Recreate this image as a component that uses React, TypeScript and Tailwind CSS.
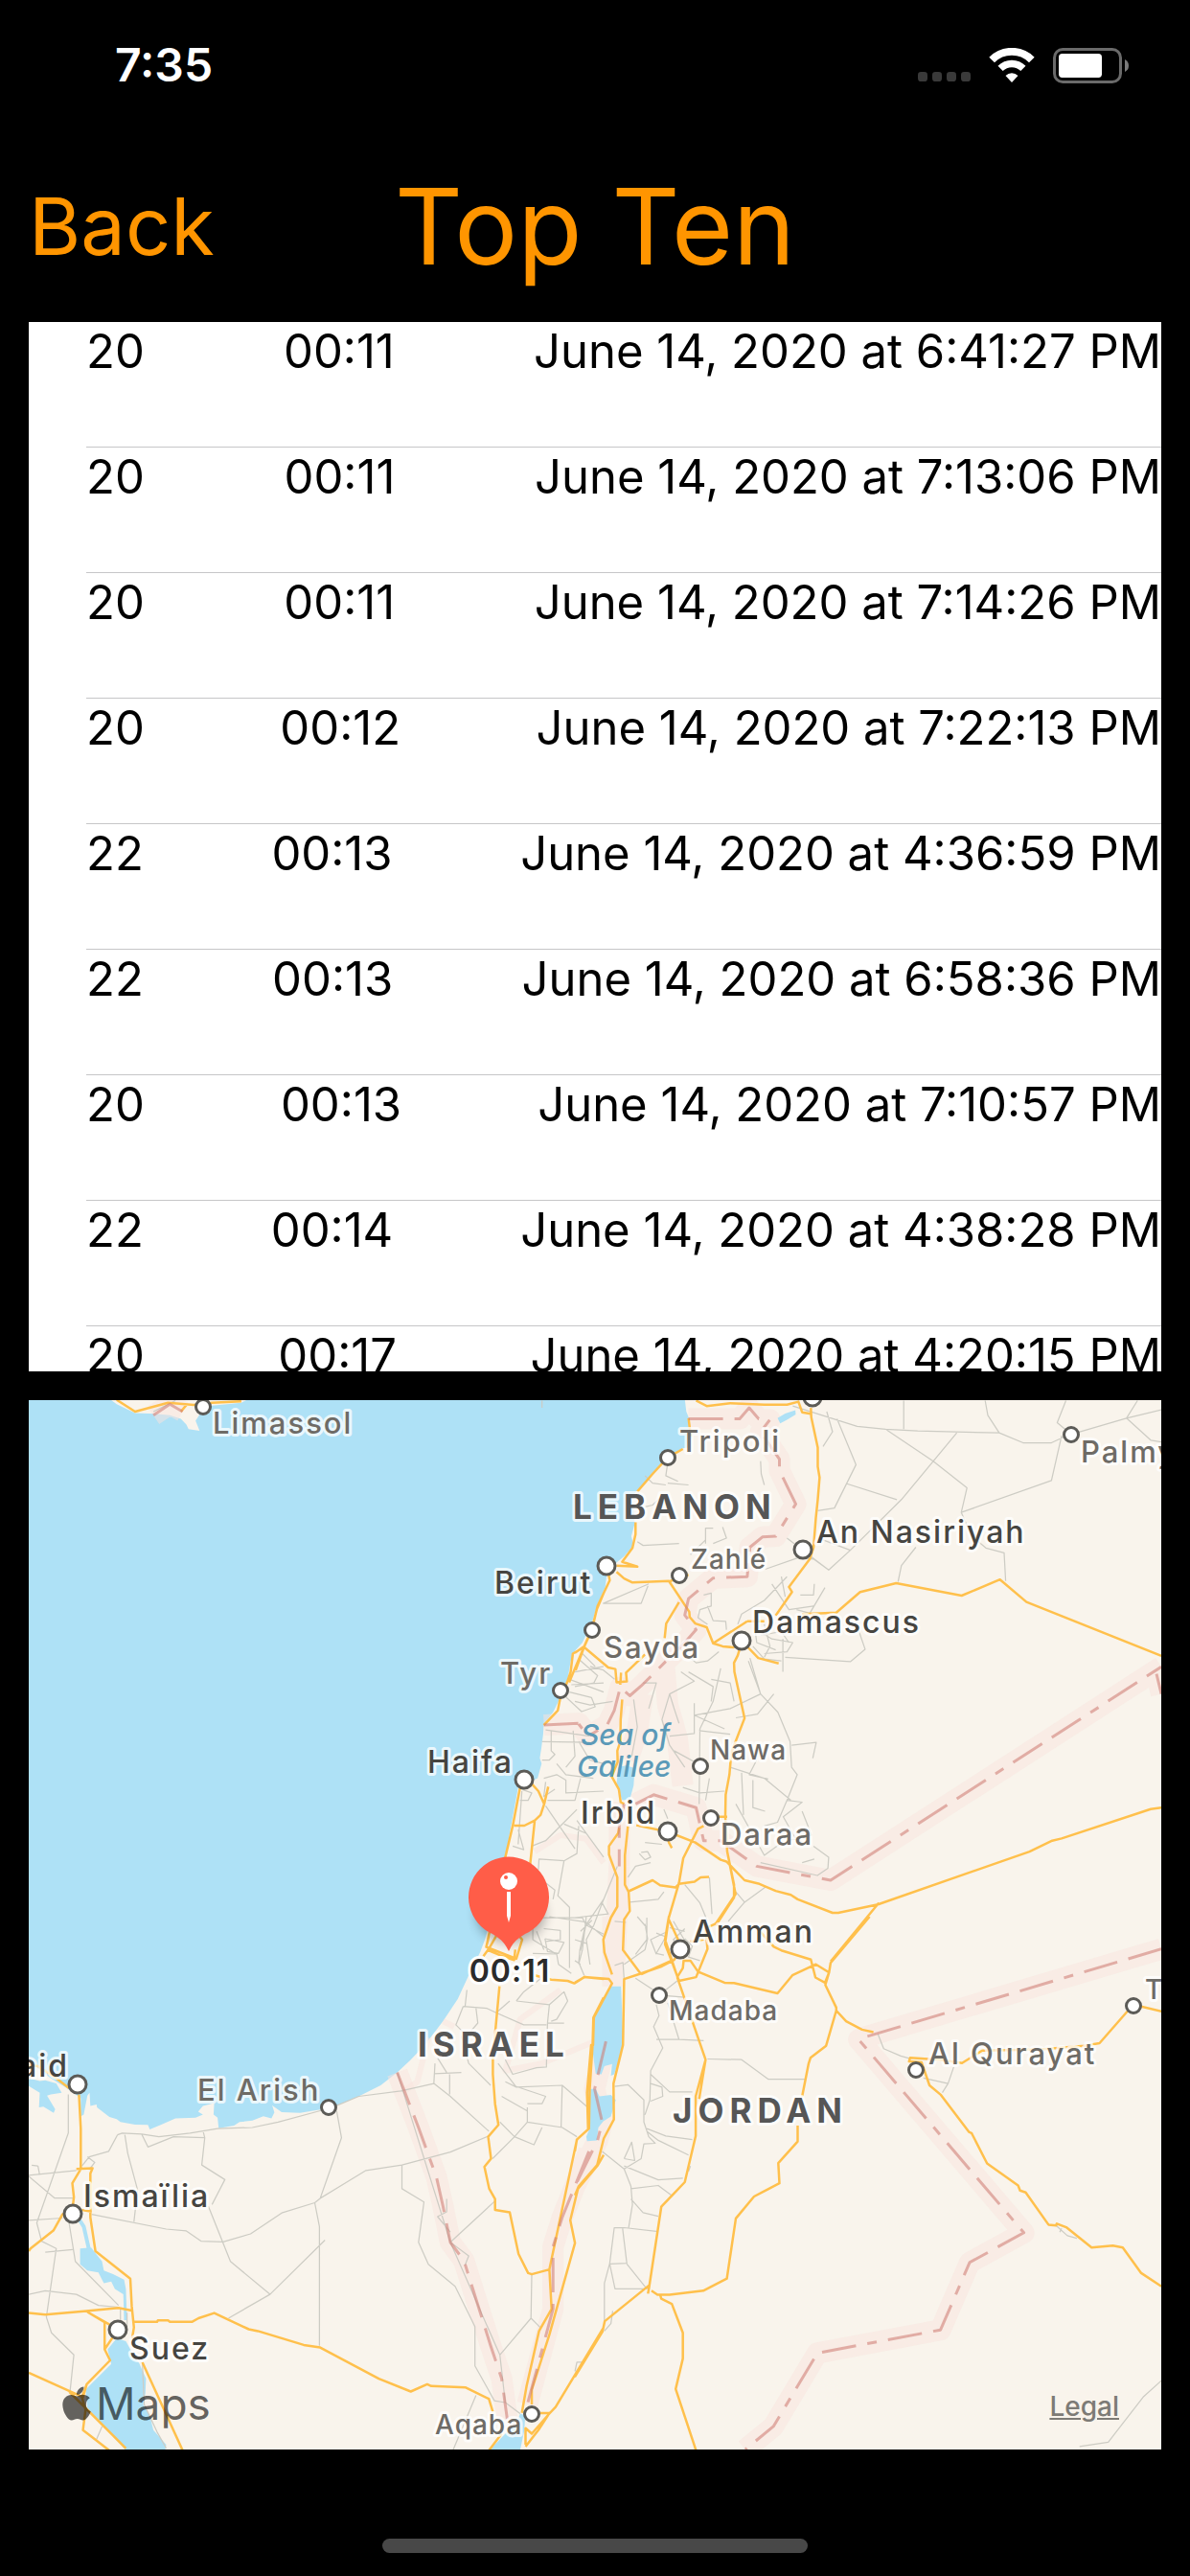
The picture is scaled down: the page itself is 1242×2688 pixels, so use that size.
import React from "react";
import { FaApple } from "react-icons/fa";

type Tile = "nw" | "ne" | "sw" | "se";

/* Each survey tile has its own grid; these map it onto the 1182 x 1095 map. */
const TILES: Record<Tile, { x: number; y: number; sx: number; sy: number }> = {
  nw: { x: 0, y: -11, sx: 0.38265, sy: 0.38265 },
  ne: { x: 570, y: -11, sx: 0.39541, sy: 0.38265 },
  sw: { x: 0, y: 539, sx: 0.38265, sy: 0.38265 },
  se: { x: 570, y: 539, sx: 0.39541, sy: 0.38265 },
};

function points(tile: Tile, line: string): string {
  const t = TILES[tile];
  return line
    .trim()
    .split(/\s+/)
    .map((p) => {
      const [x, y] = p.split(",").map(Number);
      return `${(t.x + x * t.sx).toFixed(1)} ${(t.y + y * t.sy).toFixed(1)}`;
    })
    .join("L");
}

function trace(tile: Tile, lines: string): string {
  return lines
    .split("|")
    .map((l) => "M" + points(tile, l))
    .join("");
}

const SEA =
  "M" +
  points("ne", "290,25 294,60 302,80 308,130 300,158 285,160 240,186 200,235 165,275 150,292 155,330 158,365 149,400 155,425 130,455 110,472 85,498 80,540 60,585 45,635 20,690 0,713") +
  "L" +
  points("nw", "1478,740 1470,790 1450,840 1430,880 1405,912 1403,940 1398,980 1394,1005 1399,1020 1388,1060 1370,1068 1352,1050 1335,1085 1300,1275 1270,1400 1250,1480") +
  "L" +
  points("sw", "1245,60 1232,95 1200,160 1170,225 1130,285 1080,350 1040,392 1005,425 960,460 900,490 840,515 800,525 740,535 690,533 664,515 670,534 662,550 640,544 610,556 575,560 560,570 518,577 515,548 504,540 506,508 475,516 462,532 475,540 455,548 400,550 360,568 330,580 325,568 290,567 250,560 240,552 220,546 186,520 185,512 168,516 166,480 160,488 150,540 141,545 142,495 100,465 60,440 30,418 0,390") +
  "L0 0Z";

const WATER =
  trace("sw", "0,440 30,448 45,446 75,455 90,480 60,485 50,488 72,525 68,535 40,518 28,520 30,480 0,462") +
  trace("sw", "140,905 170,902 200,940 205,965 230,975 260,990 265,1015 268,1100 260,1100 258,1030 235,1015 225,995 205,1000 190,970 160,965 140,948") +
  trace("sw", "240,1150 265,1158 280,1185 300,1215 320,1260 318,1300 312,1330 330,1360 340,1400 375,1440 372,1456 265,1456 160,1340 155,1290 225,1220 215,1180") +
  trace("sw", "1340,1355 1354,1360 1352,1400 1340,1456 1256,1456 1300,1410 1330,1385") +
  trace("se", "95,190 122,190 128,350 118,385 104,430 95,434 98,402 78,408 70,430 55,428 46,360 48,280") +
  trace("se", "35,470 55,470 65,490 95,486 108,500 95,545 75,558 62,575 58,610 32,612 30,600 40,575 35,520") +
  trace("ne", "115,1030 135,1025 158,1032 155,1080 145,1118 125,1120 110,1075") +
  trace("ne", "535,78 555,65 582,56 583,68 560,82 542,92");

const CYPRUS = trace("nw", "220,25 240,40 290,64 345,66 385,70 415,80 430,95 436,108 466,112 455,85 470,62 500,44 580,36 600,25");

const HIGHWAYS =
  trace("nw", "240,28 290,60 380,36 450,42 500,36 580,32|415,60 430,42|1568,555 1550,598 1535,655 1514,703 1484,720 1478,770 1468,800 1450,840 1443,875 1405,915|1514,703 1474,798|1372,1075 1390,1095 1406,1130 1396,1160 1380,1175 1352,1189 1324,1189|1417,1083 1406,1130|1380,1175 1367,1300|1340,1085 1320,1190 1300,1275 1275,1400 1252,1500|1255,1490 1248,1520 1330,1552 1346,1500 1330,1480|1275,1490 1255,1525 1240,1545") +
  trace("ne", "320,30 348,45 410,37 500,41 560,41 590,33 600,62 622,66|623,50 624,75 641,158 641,210 646,240 641,300 636,350 630,430 620,462 565,538 573,552 530,616|455,632 365,692 348,648 318,638 303,620 302,606 248,522 152,526 130,515 110,497|300,78 306,128|285,162 245,185 205,230 165,278|160,362 160,395 152,432 125,470 165,483 110,480|88,500 92,520 60,590 45,655 25,700 0,718|25,700 2,765|275,580 241,638 237,678|185,722 135,772 137,796 110,798 107,762 88,758 25,703|122,772 120,805|252,522 300,505|455,632 500,632|600,612 690,608 753,552 848,528 1021,562 1122,518 1192,579 1548,726|365,692 390,700 418,703 441,686 484,732 538,747|441,686 430,725 420,745 421,770 448,896 413,990 408,1050 398,1105 397,1165 402,1260 424,1376 372,1456|378,1165 402,1165|125,845 121,900 120,960 112,985 113,1015 97,1055 116,1090 121,1125 130,1130|117,1195 114,1210 90,1245 90,1268 112,1330 112,1410 95,1440 75,1500 78,1535 98,1595|140,1190 132,1270 132,1350 142,1370 145,1422 130,1445 127,1528 175,1595|162,1188 246,1206 318,1235 385,1282 400,1287 448,1338 487,1348 530,1367 570,1378 588,1390 680,1427 695,1427 800,1404 1200,1260 1260,1230 1285,1224 1520,1144 1548,1140|246,1206 248,1235 256,1250|340,1190 325,1198 286,1278 275,1345 247,1443 238,1500 270,1600|142,1368 205,1338 225,1352 265,1358 275,1348 316,1342 332,1330 354,1329|247,1443 277,1510|402,1260 420,1350 420,1385 372,1462|802,1400 675,1560") +
  trace("se", "387,0 370,20 345,32 350,88 320,165 275,175 255,120 238,75 248,0|480,30 525,82 545,92 623,117 635,166 660,180 671,152 636,130 574,160 535,209 420,181 395,180 325,150 305,120 287,120 285,140 270,165|778,0 675,126 671,152 661,186 690,248 690,256 663,352 622,385 617,400 600,490|588,570 588,613 537,672 540,727 473,763 425,823 401,987 339,1020 250,1031 218,1031 202,1020|690,256 716,285 758,308 788,315|277,92 262,118 230,135 175,155 130,170 127,350 102,455 103,553 76,605 59,677 10,735 0,760|255,120 175,157|270,165 345,390 319,490 319,598 290,724 228,791 196,1010 193,1028|345,390 328,497|196,1005 79,1103 73,1131 0,1255|225,1031 228,1042 256,1056 285,1135 285,1205 266,1288 320,1456|0,180 25,165 90,170 98,182 50,275 48,350 43,350 32,480 35,580 5,608 0,640|305,68 340,62|1548,258 1474,240 1385,345 1345,352 1230,362 1075,365 1022,399 960,390 885,385 882,395 915,397 936,460 965,485 1040,587 1047,590 1088,673 1170,733 1175,747 1190,752 1250,840 1270,842 1272,837 1297,847 1364,902 1420,897 1446,902 1494,971 1548,1008") +
  trace("sw", "0,405 25,408 75,440 110,468|137,485 142,577 142,688 119,727 123,765 119,800 92,812 68,855 5,905 0,912|130,688 174,686 168,700 168,820 182,912 277,987 281,1062 287,1120 282,1150|145,800 172,804|0,1081 45,1085 150,1076 245,1067 284,1075|160,1078 207,1106 207,1180 222,1210 158,1275 148,1310 0,1244|160,1078 225,1115 242,1128 207,1180|287,1105 350,1105 352,1101 380,1101 385,1105 445,1105 463,1095 506,1081 600,1125 625,1130 750,1168 795,1175 955,1260 1042,1295 1087,1275 1098,1280 1192,1284 1255,1315 1266,1350|310,1215 420,1456|158,1275 145,1310 155,1345 148,1400 220,1456|110,1295 265,1450|1284,190 1266,385 1266,430 1272,510 1281,568 1253,600 1261,660 1243,682 1256,742 1272,770 1272,800 1312,806 1336,920 1362,972 1372,975 1420,962|1380,160 1425,172 1470,175 1488,182 1515,165 1568,170|1568,220 1540,275 1538,350 1530,470 1528,578 1495,608 1420,962 1426,1070 1392,1130 1358,1280 1345,1353|1568,650 1552,678 1498,742 1477,828 1490,890 1420,1140 1372,1290 1372,1330|1568,1120 1437,1337 1420,1355 1372,1410 1355,1395 1355,1440|1395,1354 1420,1354 1390,1400 1355,1445|1255,1456 1290,1410|1250,90 1285,105 1324,118 1327,90");

const MINOR =
  trace("ne", "575,45 745,100 820,108 905,113 1120,118 1183,145 1258,145 1300,125 1456,78 1548,55|868,30 868,108|1083,30 1090,70 1120,118|1296,30 1273,90 1310,122|1456,78 1520,138 1548,143|1485,30 1456,78|820,108 945,195 1035,268 1020,335 1258,248 1285,125|1008,118 862,300 727,438 670,492 610,445 560,405|716,256 850,300|692,80 742,205 685,323 641,330|665,60 680,115 655,155|1020,335 1048,400 1085,432 1133,445 1137,522|900,430 862,480 853,524|727,438 650,408|502,490 590,458 630,462 670,492|595,560 630,560 632,530|585,600 620,610 660,540|560,510 500,575 440,612 430,640|340,560 360,555 360,590 330,600 325,622 350,640|350,590 365,630 398,632 400,655|270,700 320,745 350,740 380,715|490,195 492,230 500,260|245,200 240,235 272,250|185,235 205,255 240,260|225,295 205,315 185,320|245,255 300,260|390,375 400,405 365,420|345,420 345,378 365,378|165,415 180,425 275,420|305,450 345,410|195,530 75,583 175,583 193,535|520,530 565,600 630,590|545,510 555,565|480,655 520,680 575,690 560,715 500,720|470,700 500,735 545,740|490,670 545,660 565,690|555,730 727,742 766,708 745,645|462,732 490,830|549,680 549,770|475,650 480,690 530,710|500,640 515,700 500,730|458,740 490,830 536,880 568,960 572,1030 587,1050 560,1120|490,830 410,870 315,888 395,925|280,770 315,795 250,830 262,870 275,910|300,770 365,810 360,850|385,760 365,850 330,925 328,1130|525,830 482,885 425,895|315,855 315,938 250,945|360,790 410,800 420,850|262,985 315,1015|410,940 328,930|572,970 637,962 628,1005|410,1030 500,1060 570,1120|480,1010 460,1050 510,1062|440,1045 445,1160|470,1065 470,1140 502,1150|285,1085 330,1100 395,1095|560,1120 600,1125 550,1165 580,1220 605,1240|560,1120 535,1180 500,1190|600,1150 625,1215 560,1230|425,1130 500,1270 540,1240|355,1060 345,1120|490,1290 640,1325 668,1305 670,1275 630,1245|600,1290 632,1280|400,1180 440,1210|448,1398 505,1355|425,1370 448,1398 405,1450|235,1145 245,1170|185,1235 230,1240|170,1265 185,1282 200,1275 192,1260 175,1262|200,1290 160,1300 140,1330|355,1330 362,1430|290,1350 330,1400 350,1450|145,1398 220,1390 235,1370|112,1300 72,1400 88,1430 0,1440|72,1400 50,1460 30,1500 40,1568|0,1500 30,1510|10,735 60,780 50,800 0,810|0,850 40,860 100,850|40,755 75,765 105,790|180,800 215,800 195,870|155,845 165,920 150,1000|250,830 230,900 250,970 290,1030|240,1480 200,1500 215,1540|190,1440 190,1500 160,1540|105,1450 135,1453|290,1470 260,1500 290,1540|260,1450 300,1520") +
  trace("nw", "1510,720 1545,755|1490,770 1568,755|1475,790 1568,825|1480,805 1568,800|1465,838 1508,878 1545,865 1535,840 1475,825|1410,928 1530,945|1425,930 1425,985 1435,995 1420,1010 1400,1010|1485,930 1490,1000 1465,1030|1400,960 1530,962|1500,960 1530,1010 1568,1020|1440,1020 1465,1050 1540,1060|1405,1060 1440,1050 1465,1065 1465,1100 1568,1095|1410,1070 1405,1110 1435,1090|1345,1090 1372,1100 1362,1120 1340,1120|1345,1095 1335,1240|1335,1200 1350,1255 1320,1245|1372,1245 1410,1230 1470,1170 1495,1145|1410,1135 1490,1252|1415,1120 1490,1120 1505,1060|1495,1175 1568,1275|1460,1185 1520,1210|1390,1310 1392,1280 1460,1285 1495,1265 1500,1190|1460,1285 1443,1380 1475,1412 1475,1568|1410,1345 1435,1365 1430,1390|1375,1440 1510,1440 1520,1460 1505,1530|1520,1460 1568,1485|1520,1460 1568,1390|1375,1460 1375,1500 1440,1540|1405,1470 1450,1475 1450,1500 1410,1505|1400,50 1400,30|340,60 400,30") +
  trace("sw", "1408,60 1460,70 1445,100 1415,95 1408,60|1475,0 1475,140|1568,55 1520,15 1420,0|1520,15 1503,92 1500,125 1515,160|1375,100 1440,102 1445,130 1480,155|1385,40 1405,90|1330,230 1350,205 1420,150|1330,230 1420,240 1460,205 1470,230 1440,280 1425,285|1420,240 1415,290 1460,290|1415,290 1412,410 1385,412 1320,430 1300,390|1185,245 1250,250 1275,262 1312,230|1220,250 1225,290 1195,325 1165,295 1185,245|1195,200 1190,245|1275,262 1350,295 1412,295|1180,325 1200,400 1260,460|1108,400 1105,455 1150,490 1255,585|1105,428 1180,425|1148,430 1148,485|1105,455 1015,475 900,490 840,515|1115,385 1140,425|1280,400 1330,465 1455,460 1525,520|1455,460 1452,575|1360,520 1360,560 1325,600 1265,660|1290,490 1360,530|1285,560 1325,600 1378,622 1400,575|1360,560 1455,575 1495,600|1300,450 1330,465|1320,460 1410,490 1400,510 1360,510|1255,598 1150,642 1018,677 920,692 795,768|1018,677 1018,742 1078,778 1063,888 1090,948 1163,1008 1217,1118 1217,1225 1270,1320 1300,1325 1340,1355|1005,425 1150,888 1285,1195 1300,1325|1272,775 1150,888 1200,925 1190,950|1140,770 1140,805 1115,818 1150,860|1372,975 1370,1095 1285,1195|1370,1095 1395,1120|1220,1305 1158,1453|840,530 853,603 795,768 780,780 793,845 793,1170|780,780 690,808 605,865 530,887 470,885 430,857 375,852 172,812|808,882 658,1030 545,1095|658,1030 550,940 520,865 490,790|475,583 480,603 472,677 535,717 500,785|242,595 255,590 308,593 355,600 440,590 515,578 610,575 680,560 800,528|308,593 325,628 395,600 480,603|262,595 270,645 297,745 287,832|242,595 218,640 165,655 145,680|160,655 180,670 165,690|108,485 108,590 22,835 35,885 75,905 48,1092 62,1135 123,1195 112,1300|0,708 70,767 123,767|0,705 130,692|0,828 92,822|25,680 30,705|8,678 25,680|110,835 127,940 245,1060|45,915 120,908|0,1030 45,1020 130,1030 190,1060 245,1065|250,1070 250,1105|268,1080 268,1120|310,1215 315,1330 350,1405 375,1450|200,1390 185,1425|1490,1240 1495,1215 1510,1215 1500,1240") +
  trace("se", "160,168 215,205 222,214 270,175|130,172 127,125 105,133|185,20 192,60 185,90 130,130|222,214 290,220|215,240 222,270 208,300 232,358 200,420 198,500 185,540|245,235 275,335 215,335|275,335 340,338|350,388 440,390 510,443 610,443|200,430 250,478 310,478|200,455 230,465 232,490 200,503|105,463 140,458 182,500 182,560 195,600 212,618 182,620 175,660 130,688|190,578 240,598 310,608|190,585 220,610 300,650|130,660 150,615 158,665 130,660|72,640 130,688 148,735 152,785 142,848|130,680 220,718 285,713|148,742 220,733 255,760|148,770 180,807 220,817|215,858 130,848 104,848 92,945 78,1000 78,1103|126,850 137,945 92,947 106,1015 190,1015 137,947|100,1075 95,1110 78,1130|305,680 300,695|800,320 815,360 860,380 885,387|1000,410 985,455 970,480|920,440 985,455|1270,842 1300,870 1325,877|1285,850 1280,860|1548,1265 1500,1310 1408,1433 1332,1445|15,40 45,10|0,120 15,130|30,0 20,90 10,130|165,0 190,30|240,55 215,100 235,105|290,60 310,80 300,110 330,120|215,45 240,55|250,30 290,40");

const BORDERS =
  trace("ne", "300,80 435,80 460,50 485,80 515,82 490,115 540,190 540,220 583,312 530,400 495,402 462,430 455,510 365,514 300,570 290,615 320,655 290,690 175,808 145,835 120,812 104,875 85,915 35,945 10,912|160,1130 208,1105 320,1140 340,1230 385,1230 480,1300 675,1338 1548,756|1535,775 1548,830|130,1130 117,1190 117,1300") +
  trace("nw", "1405,915 1500,910 1520,935|340,70 385,40 420,60") +
  trace("se", "1548,88 770,327 749,335 1185,862 1042,943 965,1127 640,1190 524,1390 450,1453|82,340 52,470 72,560 60,610 0,735") +
  trace("sw", "1005,425 1063,575 1112,710 1130,790 1150,888 1187,938 1260,1170 1290,1260 1305,1370|1528,640 1455,820 1430,900 1430,1070 1360,1330");

const BORDER_GLOW =
  BORDERS +
  trace("se", "100,0 100,190") +
  trace("ne", "235,740 245,860 270,950 285,1080|180,830 165,930 140,1010|117,1300 105,1568");

/* The soft outline of the inner territories, narrower than a state border. */
const TERRITORY =
  trace("nw", "1380,1260 1450,1215 1520,1225 1568,1290") +
  trace("sw", "1130,285 1160,300|1090,330 1060,450 1025,475|1568,330 1400,400 1300,420 1340,280 1450,200");

type Kind = "city" | "town" | "small" | "country";

const TEXT: Record<Kind, string> = {
  city: "fill-[#464541] text-[32px] font-medium tracking-[2px]",
  town: "fill-[#6e6b66] text-[31px] font-medium tracking-[2px]",
  small: "fill-[#6e6b66] text-[28px] font-medium tracking-[1px]",
  country: "fill-[#565656] text-[35px] font-bold tracking-[6px]",
};

interface Label {
  name: string;
  kind: Kind;
  x: number;
  y: number;
  end?: boolean;
}

const LABELS: Label[] = [
  { name: "Limassol", kind: "town", x: 192, y: 35 },
  { name: "Tripoli", kind: "town", x: 679, y: 54 },
  { name: "LEBANON", kind: "country", x: 568, y: 124 },
  { name: "Beirut", kind: "city", x: 486, y: 202 },
  { name: "An Nasiriyah", kind: "city", x: 822, y: 149 },
  { name: "Zahlé", kind: "small", x: 691, y: 176 },
  { name: "Damascus", kind: "city", x: 755, y: 243 },
  { name: "Sayda", kind: "town", x: 600, y: 269 },
  { name: "Tyr", kind: "town", x: 492, y: 296 },
  { name: "Palmyra", kind: "town", x: 1098, y: 65 },
  { name: "Haifa", kind: "city", x: 416, y: 389 },
  { name: "Nawa", kind: "small", x: 711, y: 375 },
  { name: "Irbid", kind: "city", x: 576, y: 442 },
  { name: "Daraa", kind: "town", x: 722, y: 464 },
  { name: "Amman", kind: "city", x: 693, y: 566 },
  { name: "ISRAEL", kind: "country", x: 406, y: 685 },
  { name: "Madaba", kind: "small", x: 668, y: 647 },
  { name: "Al Qurayat", kind: "town", x: 939, y: 693 },
  { name: "Turaif", kind: "small", x: 1165, y: 625 },
  { name: "JORDAN", kind: "country", x: 672, y: 754 },
  { name: "Port Said", kind: "city", x: 42, y: 706, end: true },
  { name: "El Arish", kind: "town", x: 176, y: 731 },
  { name: "Ismaïlia", kind: "city", x: 57, y: 842 },
  { name: "Suez", kind: "city", x: 105, y: 1001 },
  { name: "Aqaba", kind: "small", x: 424, y: 1079 },
];

const DOTS: [number, number, number][] = [
  [182, 7, 7.5], [667, 60, 7.5], [818, -3, 9], [1088, 36, 7.5], [808, 156, 9], [679, 183, 7.5],
  [588, 240, 7.5], [744, 251, 9], [555, 303, 7.5], [603, 173, 9], [517, 396, 9], [701, 382, 7.5],
  [712, 436, 7.5], [667, 450, 9], [680, 573, 9], [658, 621, 7.5], [926, 699, 7.5], [1153, 632, 7.5],
  [51, 714, 9], [313, 738, 7.5], [46, 849, 9], [93, 970, 9], [525, 1058, 7.5],
];

const SCORES = [
  { score: 20, time: "00:11", date: "June 14, 2020 at 6:41:27 PM" },
  { score: 20, time: "00:11", date: "June 14, 2020 at 7:13:06 PM" },
  { score: 20, time: "00:11", date: "June 14, 2020 at 7:14:26 PM" },
  { score: 20, time: "00:12", date: "June 14, 2020 at 7:22:13 PM" },
  { score: 22, time: "00:13", date: "June 14, 2020 at 4:36:59 PM" },
  { score: 22, time: "00:13", date: "June 14, 2020 at 6:58:36 PM" },
  { score: 20, time: "00:13", date: "June 14, 2020 at 7:10:57 PM" },
  { score: 22, time: "00:14", date: "June 14, 2020 at 4:38:28 PM" },
  { score: 20, time: "00:17", date: "June 14, 2020 at 4:20:15 PM" },
];

function StatusBar() {
  return (
    <div className="flex h-[136px] shrink-0 items-center justify-between pl-[120px] pr-[64px] text-white">
      <time className="text-[48px] leading-[58px] font-semibold">7:35</time>
      <div className="flex items-center">
        <svg className="mt-6 h-[10px] w-[55px]" viewBox="0 0 165 30" fill="#3a3a3a" aria-hidden="true">
          <rect width="30" height="30" rx="10" />
          <rect x="45" width="30" height="30" rx="10" />
          <rect x="90" width="30" height="30" rx="10" />
          <rect x="135" width="30" height="30" rx="10" />
        </svg>
        <svg className="ml-[19px] h-9 w-12" viewBox="0 0 143 108" fill="none" stroke="#fff" aria-label="Wi-Fi">
          <path d="M9 37.4A88.5 88.5 0 0 1 134 37.4" strokeWidth="24" />
          <path d="M35.8 64.3A50.5 50.5 0 0 1 107.2 64.3" strokeWidth="22" />
          <path d="M71.5 108L52 87A28 28 0 0 1 91 87Z" fill="#fff" stroke="none" />
        </svg>
        <svg className="ml-[19px] h-[37px] w-[79px]" viewBox="0 0 237 111" fill="none" aria-label="Battery">
          <rect x="4.5" y="4.5" width="207" height="102" rx="26" stroke="#6a6a6a" strokeWidth="9" />
          <rect x="18" y="18" width="135" height="75" rx="11" fill="#fff" />
          <path d="M225 36Q237 42 237 55.5Q237 69 225 75Z" fill="#7a7a7a" />
        </svg>
      </div>
    </div>
  );
}

function MapView() {
  return (
    <section aria-label="Map" className="relative min-h-0 flex-1 basis-0 overflow-hidden bg-[#f9f4ec]">
      <svg
        className="block h-full w-full font-['Inter',sans-serif]"
        viewBox="0 0 1182 1095"
        preserveAspectRatio="xMidYMid slice"
        fill="none"
        strokeLinejoin="round"
      >
        <path d={SEA} fill="#aee1f6" />
        <path d={CYPRUS} fill="#f9f4ec" />
        <path d={BORDER_GLOW} stroke="#f9e4dd" strokeOpacity="0.5" strokeWidth="22" />
        <path d={TERRITORY} stroke="#f9e4dd" strokeOpacity="0.5" strokeWidth="6" />
        <path d={WATER} fill="#aee1f6" />
        <path d={trace("sw", "135,822 150,845 165,910")} stroke="#aee1f6" strokeWidth="4" />
        <path d={MINOR} stroke="#cdccc4" strokeWidth="1.25" />
        <path d={HIGHWAYS} stroke="#ffc04c" strokeWidth="2.5" />
        <path d={BORDERS} stroke="#cf7d75" strokeOpacity="0.58" strokeWidth="3" strokeDasharray="36 12 36 12 10 12" />
        {DOTS.map(([x, y, r]) => (
          <circle key={`${x}-${y}`} cx={x} cy={y} r={r} fill="#fff" stroke="#5c5b57" strokeWidth="3" />
        ))}
        <g stroke="#ffffff" strokeOpacity="0.75" strokeWidth="6" className="[paint-order:stroke]">
          {LABELS.map((l) => (
            <text key={l.name} x={l.x} y={l.y} textAnchor={l.end ? "end" : "start"} className={TEXT[l.kind]}>
              {l.name}
            </text>
          ))}
        </g>
        <g className="fill-[#5b9ab8] text-[30px] font-medium italic">
          <text x="576" y="360">Sea of</text>
          <text x="572" y="393">Galilee</text>
        </g>
        <g>
          <ellipse cx="503" cy="536" rx="36" ry="30" fill="#000" opacity="0.3" className="blur-[6px]" />
          <path d="M501 575C496 565 492 562 484 557A42 42 0 1 1 518 557C510 562 506 565 501 575Z" fill="#ff5d48" />
          <circle cx="501" cy="502" r="9" fill="#fff" />
          <circle cx="498" cy="498" r="2" fill="#ff5d48" />
          <path d="M499 513H503V538L501 545L499 538Z" fill="#fff" />
          <text
            x="502"
            y="607"
            textAnchor="middle"
            stroke="#fff"
            strokeWidth="6"
            className="fill-[#2b2b2b] text-[32px] font-semibold tracking-[1px] [paint-order:stroke]"
          >
            00:11
          </text>
        </g>
      </svg>
      <div className="absolute bottom-5 left-[30px] flex items-center text-black/60">
        <FaApple className="size-10" aria-hidden="true" />
        <span className="text-[46px] leading-[56px]">Maps</span>
      </div>
      <a href="#legal" className="absolute right-11 bottom-7 text-[28px] leading-[34px] font-medium text-[#7d7b76] underline decoration-2 underline-offset-2">
        Legal
      </a>
    </section>
  );
}

export default function App() {
  return (
    <div className="flex h-screen flex-col bg-black font-['Inter',sans-serif]">
      <StatusBar />
      <header className="grid h-[200px] shrink-0 grid-cols-[1fr_auto_1fr] items-center px-[30px] text-[#ff9500]">
        <button type="button" className="justify-self-start text-[83px] leading-[100px]">
          Back
        </button>
        <h1 className="text-[110px] leading-[134px]">Top Ten</h1>
      </header>
      <main className="flex min-h-0 flex-1 flex-col gap-[30px] px-[30px]">
        <section aria-label="Scores" className="min-h-0 flex-1 basis-0 overflow-hidden bg-white">
          <table className="block text-[49px] leading-[62px] text-black">
            <tbody className="block">
              {SCORES.map((s) => (
                <tr key={s.date} className="ml-[60px] flex h-[131px] justify-between border-b border-[#c6c6c8]">
                  <td>{s.score}</td>
                  <td>{s.time}</td>
                  <td className="whitespace-nowrap">{s.date}</td>
                </tr>
              ))}
            </tbody>
          </table>
        </section>
        <MapView />
      </main>
      <footer className="flex h-[132px] shrink-0 items-end justify-center pb-6">
        <div className="h-[15px] w-[444px] rounded-full bg-[#484848]" />
      </footer>
    </div>
  );
}
